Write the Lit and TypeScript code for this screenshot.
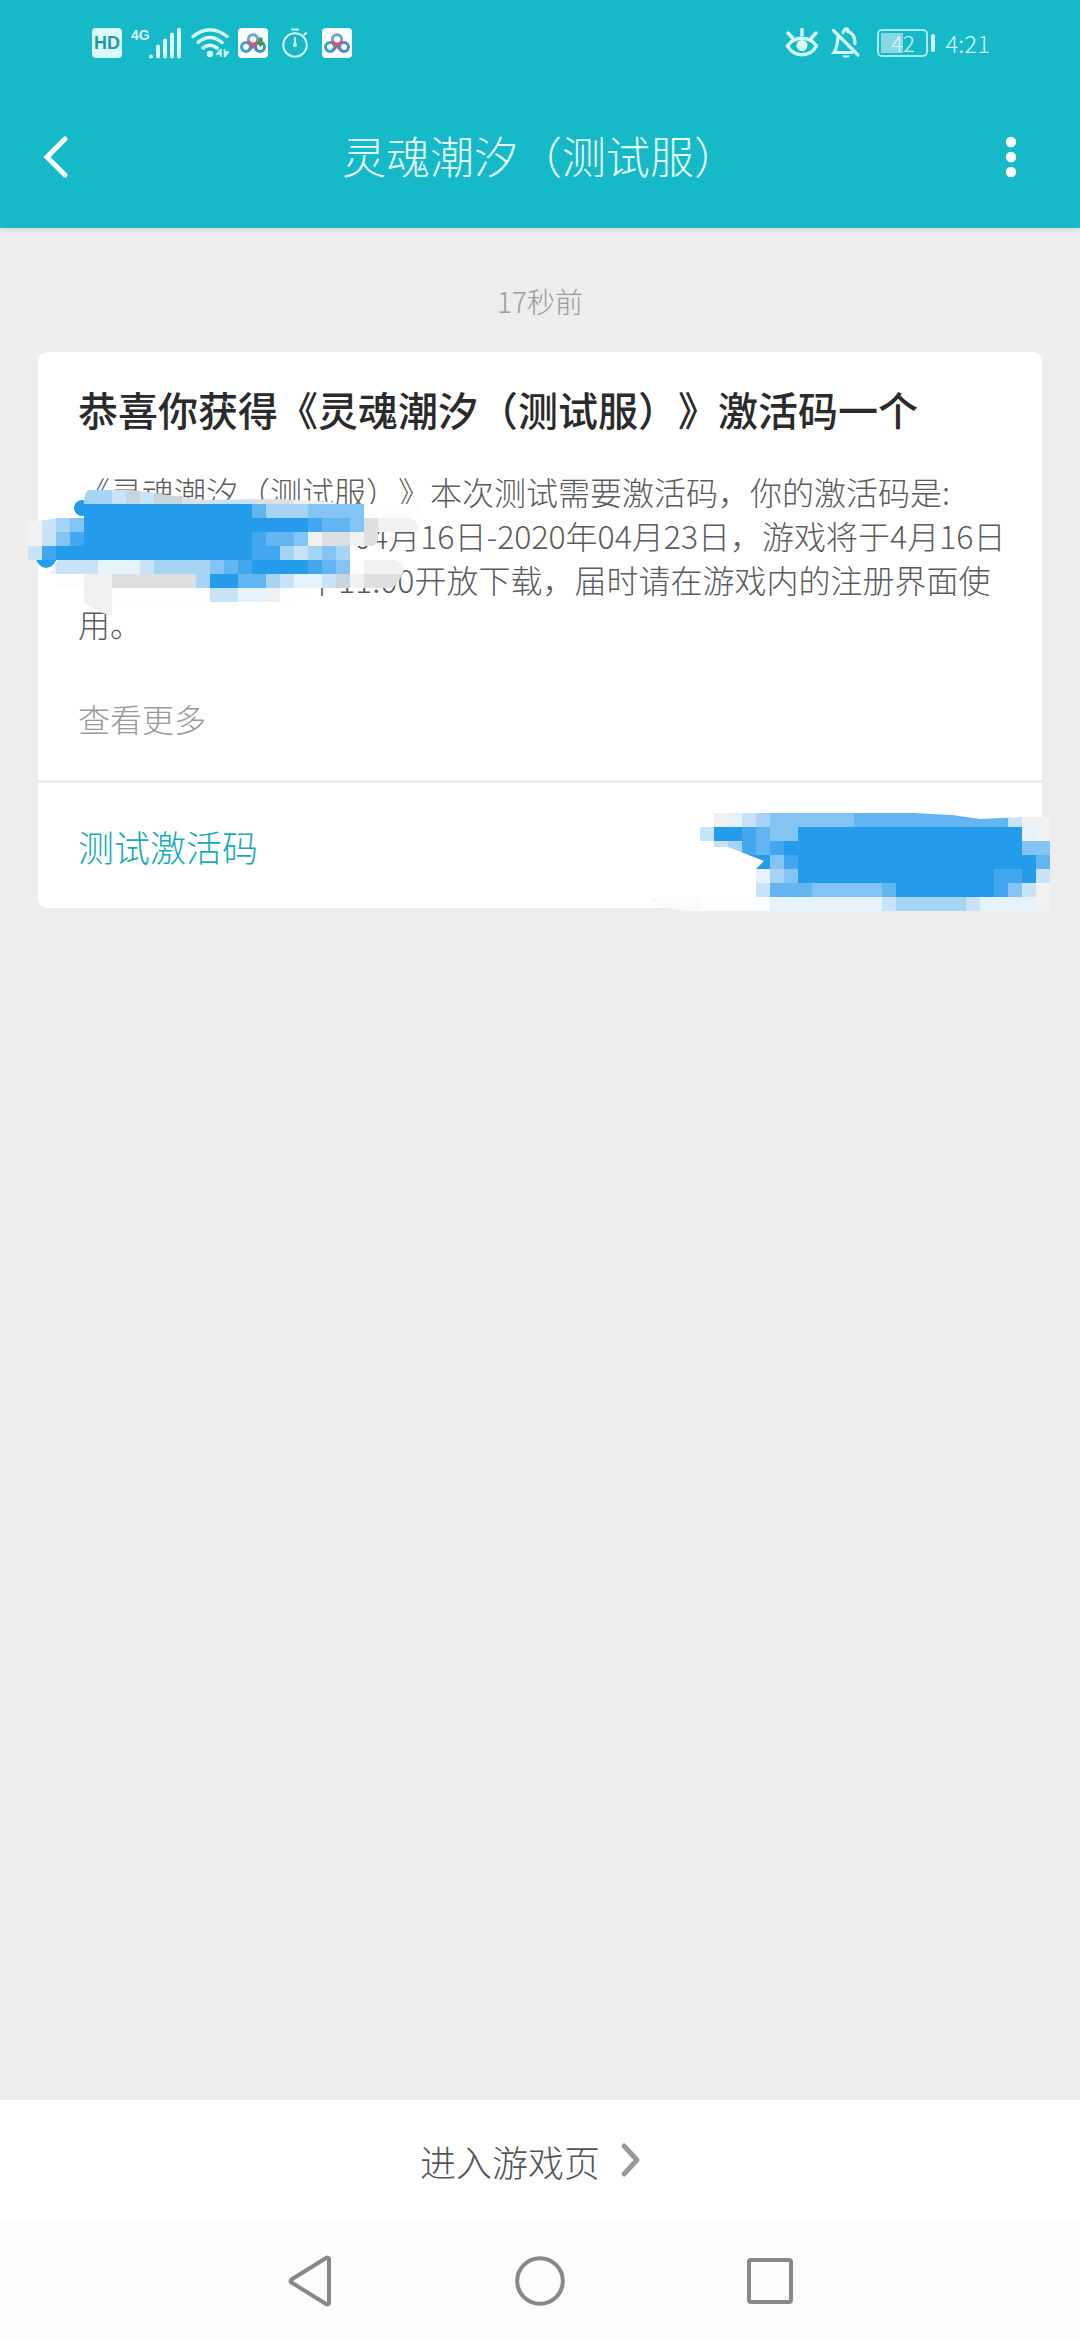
import { LitElement, html, svg, css } from "lit";
import { customElement, property } from "lit/decorators.js";

const SHADES: Record<string, string> = {
  "0": "#fbfdfe",
  "1": "#f1f1f1",
  "2": "#dedfe0",
  g: "#c9d5de",
  "3": "#e6f2fa",
  "4": "#c8e3f7",
  "5": "#a6d4f5",
  "6": "#83c4f4",
  "7": "#62b5f1",
  "8": "#42a7ef",
  "9": "#259bec",
};

const CELL = 14;

const BODY_MASK = [
  "....554g4gg22444222111......",
  "....999999999999755566660000",
  "1456999999999999999987762111",
  "1468999999999999877612212...",
  "4899999999999999885456500...",
  ".34443334555567899998760111.",
  "..00112222225997754334g1222.",
  "....1100000004433100........",
  "....11......................",
];

const CODE_MASK = [
  ".134566666677777777777411",
  "4998766999999999999999931",
  ".458789999999999999999966",
  "...9968999999999999999997",
  "....356999999999999998894",
  "....477766666799999998641",
  "0000033333333455555433331",
];

/** Pixelated scribble that hides part of a message. */
@customElement("pixel-mask")
export class PixelMask extends LitElement {
  @property({ attribute: false }) rows: string[] = [];
  @property({ attribute: false }) outline = "";
  @property({ attribute: false }) extra: unknown = null;

  static styles = css`
    :host {
      display: block;
      pointer-events: none;
    }
    .mask {
      display: block;
      overflow: visible;
    }
  `;

  render() {
    const w = Math.max(...this.rows.map((r) => r.length)) * CELL;
    const h = this.rows.length * CELL;
    return html`<svg class="mask" width=${w} height=${h} viewBox="0 0 ${w} ${h}" aria-hidden="true">
      <clipPath id="edge"><path d=${this.outline}></path></clipPath>
      ${this.extra}
      <g clip-path="url(#edge)" shape-rendering="crispEdges">
        ${this.rows.map((row, y) =>
          [...row].map((c, x) =>
            SHADES[c]
              ? svg`<rect x=${x * CELL} y=${y * CELL} width=${CELL} height=${CELL} fill=${SHADES[c]}></rect>`
              : null
          )
        )}
      </g>
    </svg>`;
  }
}

const cloud = (download: boolean) => html`
  <svg width="30" height="30" viewBox="0 0 30 30" aria-hidden="true">
    <rect width="30" height="30" rx="4" fill="#fbffff"></rect>
    <g fill="none" stroke-width="3">
      <circle cx="8" cy="19" r="4.5" stroke="#3aa3cf"></circle>
      <circle cx="22" cy="19" r="4.5" stroke="#3f93c4"></circle>
      <path d="M10.5 22.5 15 18l4.500 4.500" stroke="#6d7fb0"></path>
      <circle cx="15" cy="11.500" r="4.700" stroke="#6fa9d2"></circle>
      <path d="M10.500 13a4.700 4.700 0 0 0 9 0" stroke="#e0526b"></path>
    </g>
    ${download ? svg`<path d="M20.500 9.500h4V14H27l-4.500 5-4.500-5h2.500z" fill="#3f9d45"></path>` : null}
  </svg>`;

@customElement("status-bar")
export class StatusBar extends LitElement {
  static styles = css`
    :host {
      display: flex;
      justify-content: space-between;
      align-items: center;
      height: 86px;
      padding: 0 90px 0 92px;
      color: #d8fbfc;
      font-family: "Noto Sans CJK SC", sans-serif;
    }
    .group {
      display: flex;
      align-items: center;
    }
    .left {
      gap: 9px;
    }
    .right {
      gap: 12px;
    }
    .hd {
      width: 30px;
      height: 30px;
      border-radius: 4px;
      background: #d8fbfc;
      color: #2795a5;
      font: 700 18px/30px "Liberation Sans", sans-serif;
      text-align: center;
    }
    .signal {
      display: flex;
      align-items: flex-start;
      height: 32px;
    }
    .net {
      font: 700 14px/16px "Liberation Sans", sans-serif;
    }
    .bars {
      margin-left: -2px;
    }
    .timer {
      margin: 0 4px;
    }
    .battery {
      display: flex;
      align-items: center;
      gap: 3px;
      margin-left: 4px;
    }
    .cell {
      box-sizing: border-box;
      width: 51px;
      height: 28px;
      border: 2px solid #a5ecf0;
      border-radius: 5px;
      background: linear-gradient(90deg, #8ad9e0 22px, transparent 22px) 2px 2px / 43px 20px no-repeat;
      font-size: 22px;
      font-weight: 300;
      line-height: 23px;
      text-align: center;
    }
    .nub {
      width: 4px;
      height: 18px;
      border-radius: 2px;
      background: #d8fbfc;
    }
    .clock {
      margin-left: -2px;
      font-size: 24px;
      font-weight: 300;
      line-height: 32px;
    }
    svg {
      display: block;
    }
  `;

  render() {
    return html`
      <div class="group left">
        <span class="hd">HD</span>
        <span class="signal">
          <span class="net">4G</span>
          <svg class="bars" width="34" height="32" viewBox="0 0 34 32" aria-hidden="true">
            <g stroke="#d8fbfc" stroke-width="4" stroke-linecap="round">
              <path d="M3 29.500v.1M10 19.500v10M17 13.500v16M24 7.500v22M31 2.800v26.700"></path>
            </g>
          </svg>
        </span>
        <svg width="38" height="32" viewBox="0 0 38 32" aria-hidden="true">
          <g fill="none" stroke="#d8fbfc" stroke-width="3.500" stroke-linecap="round">
            <path d="M2 9.500Q19-4 36 9.500"></path>
            <path d="M7 15.500Q19 5.500 31 15.500"></path>
            <path d="M12 21Q19 15.500 26 21"></path>
          </g>
          <circle cx="19" cy="27" r="3.200" fill="#d8fbfc"></circle>
          <path d="M30 22v8M30 22l-4 5h4M33.500 30v-8M33.500 30l4-5h-4" fill="#d8fbfc" stroke="#d8fbfc" stroke-width="1.500"></path>
        </svg>
        ${cloud(true)}
        <svg class="timer" width="28" height="30" viewBox="0 0 28 30" aria-hidden="true">
          <g fill="none" stroke="#d8fbfc" stroke-width="2" stroke-linecap="round">
            <circle cx="14" cy="17" r="11.700"></circle>
            <path d="M11 1.500h6M23.500 6.500l1.500-1.500M14 10v6"></path>
          </g>
          <circle cx="14" cy="17" r="2" fill="#d8fbfc"></circle>
        </svg>
        ${cloud(false)}
      </div>
      <div class="group right">
        <svg width="34" height="32" viewBox="0 0 34 32" aria-hidden="true">
          <g fill="none" stroke="#d8fbfc" stroke-width="3.500" stroke-linecap="round">
            <path d="M2.500 19C9 8.500 25 8.500 31.500 19 25 30.500 9 30.500 2.500 19z"></path>
            <path d="M17 8V2.500M7.500 11 3 6M26.500 11 31 6"></path>
          </g>
          <circle cx="17" cy="18.500" r="5.500" fill="#d8fbfc"></circle>
        </svg>
        <svg width="30" height="32" viewBox="0 0 30 32" aria-hidden="true">
          <g fill="none" stroke="#d8fbfc" stroke-width="3.200" stroke-linecap="round">
            <path d="M2.500 3.500 27 28"></path>
            <path d="M12 5.500C14 .500 17 1 17 4.500c5 1.500 7 5 7 12"></path>
            <path d="M7 10.500C6 18 6 22 3 25.500h18"></path>
          </g>
          <path d="M11 28.500h8c-1.500 3-6.500 3-8 0z" fill="#d8fbfc"></path>
        </svg>
        <span class="battery"><span class="cell">42</span><span class="nub"></span></span>
        <span class="clock">4:21</span>
      </div>
    `;
  }
}

@customElement("message-card")
export class MessageCard extends LitElement {
  static styles = css`
    :host {
      display: block;
      margin: 0 38px;
      color: #5c5c5c;
      font-weight: 300;
    }
    .summary,
    .code {
      position: relative;
      background: #fff;
    }
    .summary {
      border-radius: 9px 9px 0 0;
      padding: 27px 40px 36px;
    }
    .title {
      margin: 0;
      color: #2b2b2b;
      font-size: 40px;
      font-weight: 500;
      line-height: 60px;
      white-space: nowrap;
    }
    .text {
      margin: 30px 0 0;
      font-family: "Liberation Sans Narrow", "Noto Sans CJK SC", sans-serif;
      font-size: 32px;
      line-height: 44px;
    }
    .line {
      display: block;
      white-space: nowrap;
    }
    .gap-date {
      display: inline-block;
      width: 244px;
    }
    .gap-hour {
      display: inline-block;
      width: 196px;
    }
    .more {
      display: block;
      margin-top: 47px;
      color: #9a9a9a;
      font-size: 32px;
      line-height: 52px;
      text-decoration: none;
    }
    .code {
      display: flex;
      align-items: center;
      min-height: 125px;
      margin-top: 3px;
      padding: 0 40px;
      border-radius: 0 0 9px 9px;
      color: #17acb5;
      font-size: 36px;
      line-height: 52px;
    }
    .mask-body {
      position: absolute;
      left: -10px;
      top: 138px;
    }
    .mask-code {
      position: absolute;
      right: -8px;
      top: 30px;
    }
  `;

  render() {
    return html`
      <section class="summary">
        <h2 class="title">恭喜你获得《灵魂潮汐（测试服）》激活码一个</h2>
        <p class="text">
          <span class="line">《灵魂潮汐（测试服）》本次测试需要激活码，你的激活码是:</span>
          <span class="line"><span class="gap-date"></span>年04月16日-2020年04月23日，游戏将于4月16日</span>
          <span class="line"><span class="gap-hour"></span>上午11:00开放下载，届时请在游戏内的注册界面使</span>
          <span class="line">用。</span>
        </p>
        <a class="more" href="#more">查看更多</a>
        <pixel-mask
          class="mask-body"
          .rows=${BODY_MASK}
          .outline=${"M60 0H104L176 10 250 9 340 14H392V28H384Q392 34 390 42H364Q352 46 346 56H322V70H368Q378 74 375 82 372 92 364 98H280Q276 108 268 112H84V126Q62 120 52 108 24 102 22 84L30 70H0V32Q20 30 42 26H56V14Q56 4 60 0Z"}
          .extra=${svg`<circle cx="54" cy="18" r="8" fill="#259bec"></circle><path d="M8 66h22q-4 12-12 12Q8 76 8 66z" fill="#259bec"></path>`}
        ></pixel-mask>
      </section>
      <section class="code">
        测试激活码
        <pixel-mask
          class="mask-code"
          .rows=${CODE_MASK}
          .outline=${"M14 0H214L252 2 280 6 322 4H350V98H0Q-30 96-40 84H56V56L64 48 28 34H14V28H0V14H14Z"}
          .extra=${svg`<path d="M-52 84H4v14H-12Q-42 96-52 84z" fill="#f9fafa"></path>`}
        ></pixel-mask>
      </section>
    `;
  }
}

@customElement("app-root")
export class AppRoot extends LitElement {
  static styles = css`
    :host {
      display: flex;
      flex-direction: column;
      min-height: 100vh;
      background: #ededed;
      font-family: "Noto Sans CJK SC", sans-serif;
      font-weight: 300;
      text-spacing-trim: space-all;
    }
    button {
      display: flex;
      align-items: center;
      justify-content: center;
      margin: 0;
      padding: 0;
      border: 0;
      background: none;
      color: inherit;
      font: inherit;
    }
    svg {
      display: block;
    }
    .top {
      background: #15b9c8;
      box-shadow: 0 1px 6px rgba(0, 0, 0, 0.15);
    }
    .app-bar {
      display: grid;
      grid-template-columns: 110px 1fr 110px;
      align-items: center;
      height: 142px;
      color: #e4fdff;
    }
    .app-bar .back,
    .app-bar .menu {
      height: 100px;
    }
    .app-bar .menu {
      padding-right: 28px;
    }
    .heading {
      margin: 0;
      padding-bottom: 4px;
      font-size: 44px;
      font-weight: 300;
      line-height: 64px;
      text-align: center;
    }
    main {
      flex: 1;
    }
    .time {
      display: block;
      margin: 52px 0 30px;
      color: #9b9b9b;
      font-size: 28px;
      line-height: 42px;
      text-align: center;
    }
    .enter {
      width: 100%;
      height: 122px;
      background: #fff;
      color: #555;
      font-size: 36px;
      line-height: 52px;
    }
    .nav {
      display: grid;
      grid-template-columns: repeat(3, 1fr);
      height: 118px;
      padding: 0 18%;
      background: #fcfcfc;
    }
  `;

  render() {
    return html`
      <header class="top">
        <status-bar></status-bar>
        <div class="app-bar">
          <button class="back" aria-label="返回">
            <svg width="30" height="44" viewBox="0 0 30 44" aria-hidden="true">
              <path d="M25 4 7 22 25 40" fill="none" stroke="#fff" stroke-width="5" stroke-linecap="round"></path>
            </svg>
          </button>
          <h1 class="heading">灵魂潮汐（测试服）</h1>
          <button class="menu" aria-label="更多">
            <svg width="12" height="44" viewBox="0 0 12 44" aria-hidden="true">
              <g fill="#fff">
                <circle cx="6" cy="7" r="5.200"></circle>
                <circle cx="6" cy="22" r="5.200"></circle>
                <circle cx="6" cy="37" r="5.200"></circle>
              </g>
            </svg>
          </button>
        </div>
      </header>
      <main>
        <time class="time">17秒前</time>
        <message-card></message-card>
      </main>
      <button class="enter">
        进入游戏页
        <svg width="60" height="40" viewBox="0 0 60 40" aria-hidden="true">
          <path d="M24 5 37 19 24 33" fill="none" stroke="#999" stroke-width="5" stroke-linecap="round" stroke-linejoin="round"></path>
        </svg>
      </button>
      <nav class="nav">
        <button aria-label="后退">
          <svg width="52" height="54" viewBox="0 0 52 54" aria-hidden="true">
            <path d="M45 4.500v45q-1 1.500-3 .5L7.500 28.500q-2-1.500 0-3L42 4q2-1 3 .500z" fill="none" stroke="#888" stroke-width="4"></path>
          </svg>
        </button>
        <button aria-label="主页">
          <svg width="52" height="54" viewBox="0 0 52 54" aria-hidden="true">
            <circle cx="26" cy="27" r="22.800" fill="none" stroke="#888" stroke-width="4"></circle>
          </svg>
        </button>
        <button aria-label="最近任务">
          <svg width="52" height="54" viewBox="0 0 52 54" aria-hidden="true">
            <rect x="5" y="6" width="42" height="42" rx="2" fill="none" stroke="#888" stroke-width="4"></rect>
          </svg>
        </button>
      </nav>
    `;
  }
}
